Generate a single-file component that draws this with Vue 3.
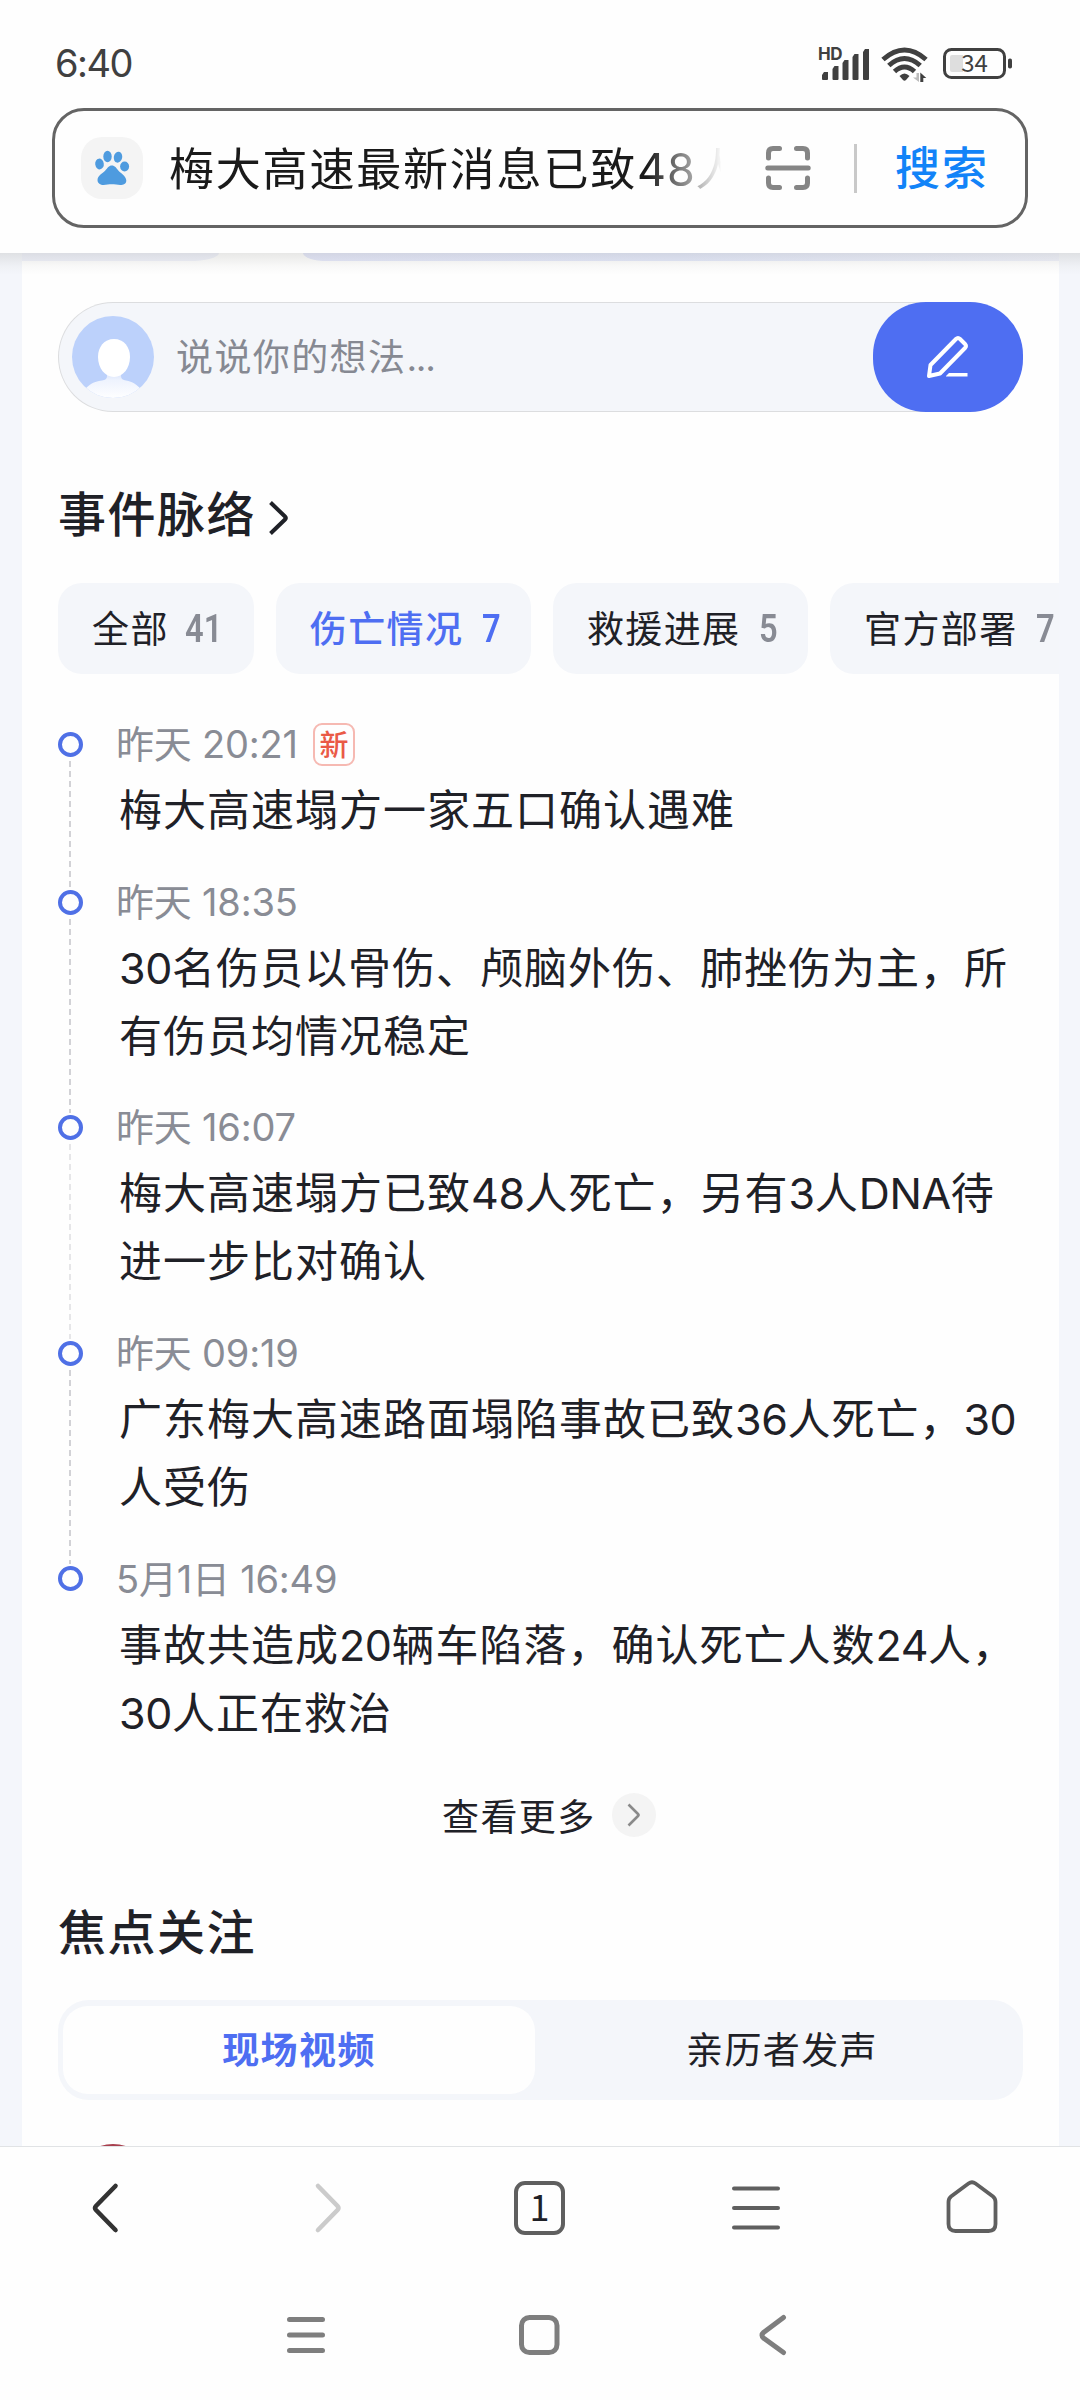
<script setup>
const chips = [
  { label: '全部', count: '41' },
  { label: '伤亡情况', count: '7', active: true },
  { label: '救援进展', count: '5' },
  { label: '官方部署', count: '7' },
]

const events = [
  { time: '昨天 20:21', fresh: true, lines: ['梅大高速塌方一家五口确认遇难'] },
  { time: '昨天 18:35', lines: ['30名伤员以骨伤、颅脑外伤、肺挫伤为主，所', '有伤员均情况稳定'] },
  { time: '昨天 16:07', faint: true, lines: ['梅大高速塌方已致48人死亡，另有3人DNA待', '进一步比对确认'] },
  { time: '昨天 09:19', lines: ['广东梅大高速路面塌陷事故已致36人死亡，30', '人受伤'] },
  { time: '5月1日 16:49', lines: ['事故共造成20辆车陷落，确认死亡人数24人，', '30人正在救治'] },
]

// Latin runs are spaced more tightly than the Chinese text around them
const runs = (line) =>
  line.split(/([0-9A-Z]+)/).filter(Boolean).map((text) => ({ text, latin: /^[0-9A-Z]/.test(text) }))
</script>

<template>
  <div class="screen">
    <header class="top">
      <div class="status">
        <span class="clock">6:40</span>
        <div class="status-icons">
          <svg class="signal" width="52" height="34" viewBox="0 0 52 34">
            <text x="-1" y="13.500" class="hd">HD</text>
            <g fill="#404040">
              <path d="M3 33v-4l2-3h4v7q0 1-1 1H4q-1 0-1-1z" />
              <path d="M13.500 33V23l2-3h4v13q0 1-1 1h-4q-1 0-1-1z" />
              <path d="M23.500 33V17l2-3h4v19q0 1-1 1h-4q-1 0-1-1z" />
              <path d="M33.500 33V11l2-3h4v25q0 1-1 1h-4q-1 0-1-1z" />
              <path d="M44 33V6l2-3h4v30q0 1-1 1h-4q-1 0-1-1z" />
            </g>
          </svg>
          <svg class="wifi" width="48" height="36" viewBox="0 0 48 36">
            <g fill="none" stroke="#404040" stroke-width="5">
              <path d="M2 12.500Q23.500-6.500 45 12.500" />
              <path d="M7.800 18.500Q23.500 4.500 39.200 18.500" />
              <path d="M13.500 24.500Q23.500 15.500 33.500 24.500" />
            </g>
            <path d="M18.500 29q5-5 10 0l-3.500 4q-1.500 1.500-3 0z" fill="#404040" />
            <path d="M35.500 26h2.500v9l-6-4.500h3.500z" fill="#bbb" />
            <path d="M39.300 35v-9.500l6 5.500h-3v4z" fill="#404040" />
          </svg>
          <svg class="battery" width="70" height="32" viewBox="0 0 70 32">
            <rect x="1.500" y="1.500" width="60" height="28" rx="7" fill="none" stroke="#404040" stroke-width="3" />
            <path d="M7 9q0-2 2-2h11v17H9q-2 0-2-2z" fill="#dedede" />
            <rect x="65" y="10.500" width="4" height="10" rx="1.800" fill="#404040" />
            <text x="31.500" y="24.300" text-anchor="middle" class="level">34</text>
          </svg>
        </div>
      </div>
      <div class="search">
        <div class="logo">
          <svg width="36" height="36" viewBox="0 0 36 36" fill="#4e9bdf">
            <ellipse cx="5.500" cy="14" rx="4.300" ry="5.400" transform="rotate(-8 5.500 14)" />
            <ellipse cx="13.500" cy="6.500" rx="4.200" ry="5.700" />
            <ellipse cx="24" cy="7.200" rx="4.200" ry="5.500" transform="rotate(12 24 7.200)" />
            <ellipse cx="30.600" cy="16.500" rx="4.500" ry="5" />
            <path d="M17.800 15.500c3 0 4.500 2.500 6.500 5s8 5.500 8 10c0 3.500-3 4.500-6 4.500-3 0-5.500-.7-8.500-.7S12.500 35 9.500 35s-6-1.500-6-5c0-4.500 5.500-7 7.800-9.500s3.500-5 6.500-5z" />
          </svg>
        </div>
        <div class="query">梅大高速最新消息已致<span>48</span>人</div>
        <svg class="scan" width="46" height="46" viewBox="0 0 46 46" fill="none" stroke="#858585" stroke-width="5" stroke-linecap="round">
          <path d="M3.500 13V8q0-4.500 4.500-4.500h6.500M31.500 3.500H38q4.500 0 4.500 4.500v5M3.500 33v5q0 4.500 4.500 4.500h6.500M31.500 42.500H38q4.500 0 4.500-4.500v-5M2.800 23h40.400" />
        </svg>
        <i class="divider"></i>
        <span class="go">搜索</span>
      </div>
    </header>

    <main class="page">
      <div class="card">
        <div class="banner">
          <i class="banner-left"></i>
          <i class="banner-right"></i>
        </div>

        <div class="comment">
          <svg class="avatar" width="82" height="82" viewBox="0 0 82 82">
            <defs>
              <clipPath id="face"><circle cx="41" cy="41" r="41" /></clipPath>
              <linearGradient id="body" x1="0" y1="0" x2="0" y2="1">
                <stop offset="0" stop-color="#cfdcfb" />
                <stop offset=".35" stop-color="#eef3fe" />
                <stop offset="1" stop-color="#fff" />
              </linearGradient>
            </defs>
            <g clip-path="url(#face)">
              <rect width="82" height="82" fill="#bcd1fb" />
              <path d="M35 54h14v6c0 3 2 4 5 4.500 7 1.500 10 3.500 16 9.500v9H12v-9c6-6 9-8 18-9.500 3-.5 5-1.500 5-4.500z" fill="url(#body)" />
              <path d="M42 23c10 0 16 8 16 18 0 11-7 20-16 20s-16-9-16-20c0-10 6-18 16-18z" fill="#fff" />
            </g>
          </svg>
          <span class="hint">说说你的想法<span>...</span></span>
          <div class="write">
            <svg width="44" height="44" viewBox="0 0 44 44" fill="none" stroke="#fff" stroke-width="4" stroke-linejoin="round">
              <path d="M3 41l1.500-11L30 4q2-2 4 0l5 5q2 2 0 4L14 38.500z" />
              <path d="M20 41l3-3h18.500v3.500H20z" fill="#fff" stroke="none" />
            </svg>
          </div>
        </div>

        <h2 class="heading thread">
          <span>事件脉络</span>
          <svg width="20" height="36" viewBox="0 0 20 36" fill="none" stroke="#1f2127" stroke-width="4">
            <path d="M1.500 2.500L16 16.500q1.500 1.500 0 3L1.500 33.500" />
          </svg>
        </h2>

        <div class="chips">
          <div v-for="chip in chips" :key="chip.label" class="chip" :class="{ active: chip.active }">
            <span class="label">{{ chip.label }}</span>
            <b :class="{ wide: chip.count.length > 1 }"><span>{{ chip.count }}</span></b>
          </div>
        </div>

        <ul class="timeline">
          <li v-for="item in events" :key="item.time" :class="{ faint: item.faint }">
            <div class="rail"><i class="dot"></i><i class="dash"></i></div>
            <div class="entry">
              <div class="time">
                <span>{{ item.time }}</span>
                <em v-if="item.fresh">新</em>
              </div>
              <p v-for="line in item.lines" :key="line"><span v-for="(run, i) in runs(line)" :key="i" :class="{ latin: run.latin }">{{ run.text }}</span></p>
            </div>
          </li>
        </ul>

        <div class="more">
          <span>查看更多</span>
          <i>
            <svg width="14" height="24" viewBox="0 0 14 24" fill="none" stroke="#8a8a8a" stroke-width="2.600">
              <path d="M1.500 1.500L11 11q1 1 0 2L1.500 22.500" />
            </svg>
          </i>
        </div>

        <h2 class="heading focus">焦点关注</h2>

        <div class="tabs">
          <div class="tab on">现场视频</div>
          <div class="tab">亲历者发声</div>
        </div>

        <i class="author"></i>
      </div>
    </main>

    <footer class="bottom">
      <nav class="browser">
        <svg width="60" height="60" viewBox="0 0 60 60"><path d="M37.500 8L18 28q-1.800 2 0 4L37.500 52" stroke="#333" /></svg>
        <svg width="60" height="60" viewBox="0 0 60 60"><path d="M22 8L41.500 28q1.800 2 0 4L22 52" stroke="#cbcbcb" /></svg>
        <div class="count"><span>1</span></div>
        <svg width="60" height="60" viewBox="0 0 60 60"><path d="M10 10.500h44M10 30h44M10 49.500h44" stroke="#5f5f5f" stroke-width="4" /></svg>
        <svg width="60" height="60" viewBox="0 0 60 60"><path d="M6.500 24q0-3.500 2.500-5.500L26.500 5.500q3.500-2.500 7 0L51 18.500q2.500 2 2.500 5.500v22q0 7-7 7h-33q-7 0-7-7z" stroke="#5f5f5f" stroke-width="3.800" /></svg>
      </nav>
      <nav class="system">
        <svg width="44" height="44" viewBox="0 0 44 44"><path d="M5.500 6.500h33M5.500 22h33M5.500 37.500h33" /></svg>
        <svg width="44" height="44" viewBox="0 0 44 44"><rect x="3.500" y="4.500" width="35.500" height="35" rx="8" /></svg>
        <svg width="44" height="44" viewBox="0 0 44 44"><path d="M31.500 4.500L11.500 19.500q-3 2.500 0 5.500L31.500 39.500" /></svg>
      </nav>
    </footer>
  </div>
</template>

<style>
body {
  margin: 0;
  background: #fff;
}
</style>

<style scoped>
.screen {
  width: 1080px;
  height: 2400px;
  display: flex;
  flex-direction: column;
  overflow: hidden;
  background: #fefefe;
  color: #1f2127;
  font-family: Inter, "Noto Sans CJK SC", sans-serif;
  white-space: nowrap;
}
svg { display: block; flex: none; overflow: visible; }

/* status bar and search */
.top {
  height: 253px;
  flex: none;
  box-sizing: border-box;
  background: #fefefe;
}
.status {
  height: 108px;
  display: flex;
  justify-content: space-between;
  box-sizing: border-box;
  padding: 42px 67px 0 55px;
}
.clock { font-size: 38px; line-height: 42px; color: #404040; letter-spacing: -1.5px; }
.status-icons { display: flex; align-items: flex-start; }
.signal { margin-top: 4px; }
.wifi { margin: 5px 0 0 10px; }
.battery { margin: 6px 0 0 14px; }
.hd { font: 700 17px Inter, sans-serif; letter-spacing: -0.5px; fill: #404040; }
.level { font: 400 24px "Noto Sans CJK SC", sans-serif; fill: #404040; }
.search {
  margin: 0 52px;
  height: 120px;
  box-sizing: border-box;
  border: 3px solid #646464;
  border-radius: 32px;
  display: flex;
  align-items: center;
  padding-left: 26px;
}
.logo {
  width: 62px;
  height: 62px;
  border-radius: 21px;
  background: #f4f4f4;
  display: flex;
  align-items: center;
  justify-content: center;
}
.query {
  margin-left: 26px;
  padding-top: 3px;
  width: 578px;
  font-size: 45px;
  line-height: 64px;
  letter-spacing: 1.8px;
  color: #1a1a1a;
  -webkit-mask-image: linear-gradient(90deg, #000 478px, rgba(0, 0, 0, 0.04) 551px, transparent 552px);
  mask-image: linear-gradient(90deg, #000 478px, rgba(0, 0, 0, 0.04) 551px, transparent 552px);
}
.query span { letter-spacing: 0.8px; }
.scan { margin-left: 18px; }
.divider { width: 3px; height: 49px; margin-left: 43px; background: #c9c9c9; }
.go { margin-left: 38px; padding-top: 2px; font-size: 45px; letter-spacing: 2px; font-weight: 500; color: #1283f8; line-height: 64px; }

/* page body */
.page {
  height: 1893px;
  flex: none;
  box-sizing: border-box;
  padding: 0 21px 0 22px;
  overflow: hidden;
  background: #f4f6fb;
  position: relative;
}
.page::before {
  content: "";
  position: absolute;
  inset: 0 0 auto 0;
  height: 22px;
  background: linear-gradient(rgba(80, 80, 70, 0.13), rgba(80, 80, 70, 0.03) 60%, transparent);
  z-index: 1;
}
.card { height: 1893px; background: #fefefe; overflow: hidden; }
.banner { height: 8px; display: flex; justify-content: space-between; }
.banner-left { width: 197px; border-radius: 0 0 30px 0 / 0 0 8px 0; background: #f0f2fb; }
.banner-right { width: 756px; border-radius: 0 0 0 24px / 0 0 0 8px; background: linear-gradient(90deg, #e6e9fb, #e5eafb 50%, #f0f2fb); }

.comment {
  margin: 41px 36px 0;
  height: 110px;
  box-sizing: border-box;
  border: 1px solid #dcdddf;
  border-right: 0;
  border-radius: 55px;
  background: #f4f6fa;
  display: flex;
  align-items: center;
}
.avatar { margin-left: 13px; }
.hint { margin-left: 22px; padding-top: 1px; flex: 1; font-size: 37px; letter-spacing: 1.4px; color: #868992; line-height: 54px; }
.hint span { letter-spacing: -1.2px; }
.write {
  width: 150px;
  height: 110px;
  border-radius: 53px;
  background: #4e6ef2;
  display: flex;
  align-items: center;
  justify-content: center;
}

.heading { margin: 0; font-size: 48px; line-height: 64px; letter-spacing: 1.5px; font-weight: 500; }
.thread { margin: 71px 0 0 36px; display: flex; align-items: center; }
.thread svg { margin: 6px 0 0 13px; }

.chips { display: flex; gap: 22px; margin: 36px 0 0 36px; }
.chip {
  flex: none;
  height: 91px;
  border-radius: 24px;
  padding: 0 33px 0 34px;
  background: #f4f6fa;
  display: flex;
  align-items: center;
  font-size: 37px;
  letter-spacing: 1.4px;
}
.label { margin-top: -4px; }
.chip b { width: 15px; margin-left: 19.5px; color: #888b94; font: 600 38px Roboto, sans-serif; line-height: 60px; letter-spacing: 0; }
.chip b.wide { width: 35px; margin-left: 17px; }
.chip b span { display: inline-block; margin: -3px 0 0 -1px; transform: scaleX(0.86); transform-origin: 0 50%; }
.chip.active, .chip.active b { color: #4e6ef2; }
.chip.active { font-weight: 500; }

.timeline { list-style: none; margin: 39px 0 0; padding: 0 0 0 36px; }
.timeline li { display: flex; }
.rail { width: 25px; display: flex; flex-direction: column; align-items: center; padding-top: 19px; }
.dot { width: 25px; height: 25px; box-sizing: border-box; border: 4px solid #4f70e6; border-radius: 50%; flex: none; }
.dash {
  width: 2px;
  flex: 1;
  margin: 4px 1px -17px 0;
  background: repeating-linear-gradient(#d2d2d6 0 6px, transparent 6px 10px);
}
.faint .dash { opacity: 0.55; }
li:last-child .dash { visibility: hidden; }
.entry { margin-left: 33px; padding-bottom: 26.3px; }
.time {
  height: 63.3px;
  box-sizing: border-box;
  padding-bottom: 6px;
  display: flex;
  align-items: center;
  font-size: 38px;
  color: #898c95;
  letter-spacing: -0.2px;
}
.time em {
  margin: 6px 0 0 15px;
  width: 38px;
  height: 39px;
  border: 2px solid #f6b9b2;
  border-radius: 9px;
  font: 500 29px/37px "Noto Sans CJK SC", sans-serif;
  text-align: center;
  color: #ea5a46;
}
.entry p { margin: 0 0 0 3px; font-size: 43px; letter-spacing: 1px; line-height: 68px; }
.latin { letter-spacing: -0.4px; }

.more { margin-top: 14px; padding-left: 420px; display: flex; align-items: center; height: 60px; font-size: 37px; letter-spacing: 1.4px; }
.more span { margin-top: -3px; }
.more i { width: 44px; height: 44px; margin-left: 16px; margin-top: -4px; border-radius: 50%; background: #f4f4f4; display: flex; align-items: center; justify-content: center; }
.focus { margin: 54.4px 0 0 36px; }

.tabs {
  margin: 35px 36px 0;
  height: 100px;
  box-sizing: border-box;
  padding: 6px 5px;
  border-radius: 31px;
  background: #f4f6fa;
  display: flex;
}
.tab { flex: 1; display: flex; align-items: center; justify-content: center; padding: 0 0 4px 11px; font-size: 37px; letter-spacing: 1.4px; }
.tab.on { flex: 0 0 472px; box-sizing: border-box; padding-left: 0; background: #fefefe; border-radius: 25px; font-weight: 700; color: #4e6ef2; }
.author { display: block; width: 82px; height: 82px; margin: 44px 0 0 50px; border-radius: 50%; background: #a8404e; }

/* navigation */
.bottom { flex: 1; border-top: 1px solid #e1e3e5; background: #fefefe; }
.browser { display: flex; justify-content: space-between; align-items: center; height: 121px; padding: 0 78px; }
.browser svg { fill: none; stroke-width: 4.6; stroke-linecap: round; }
.count {
  width: 51px;
  height: 54px;
  box-sizing: border-box;
  border: 4px solid #5f5f5f;
  border-radius: 11px;
  display: flex;
  align-items: center;
  justify-content: center;
  padding-bottom: 5px;
  margin-right: 1px;
  font: 400 36px/40px "Noto Sans CJK SC", sans-serif;
}
.system { display: flex; justify-content: space-between; padding: 45px 284px 0; }
.system svg { fill: none; stroke: #7e7e7e; stroke-width: 5; stroke-linecap: round; }
</style>
